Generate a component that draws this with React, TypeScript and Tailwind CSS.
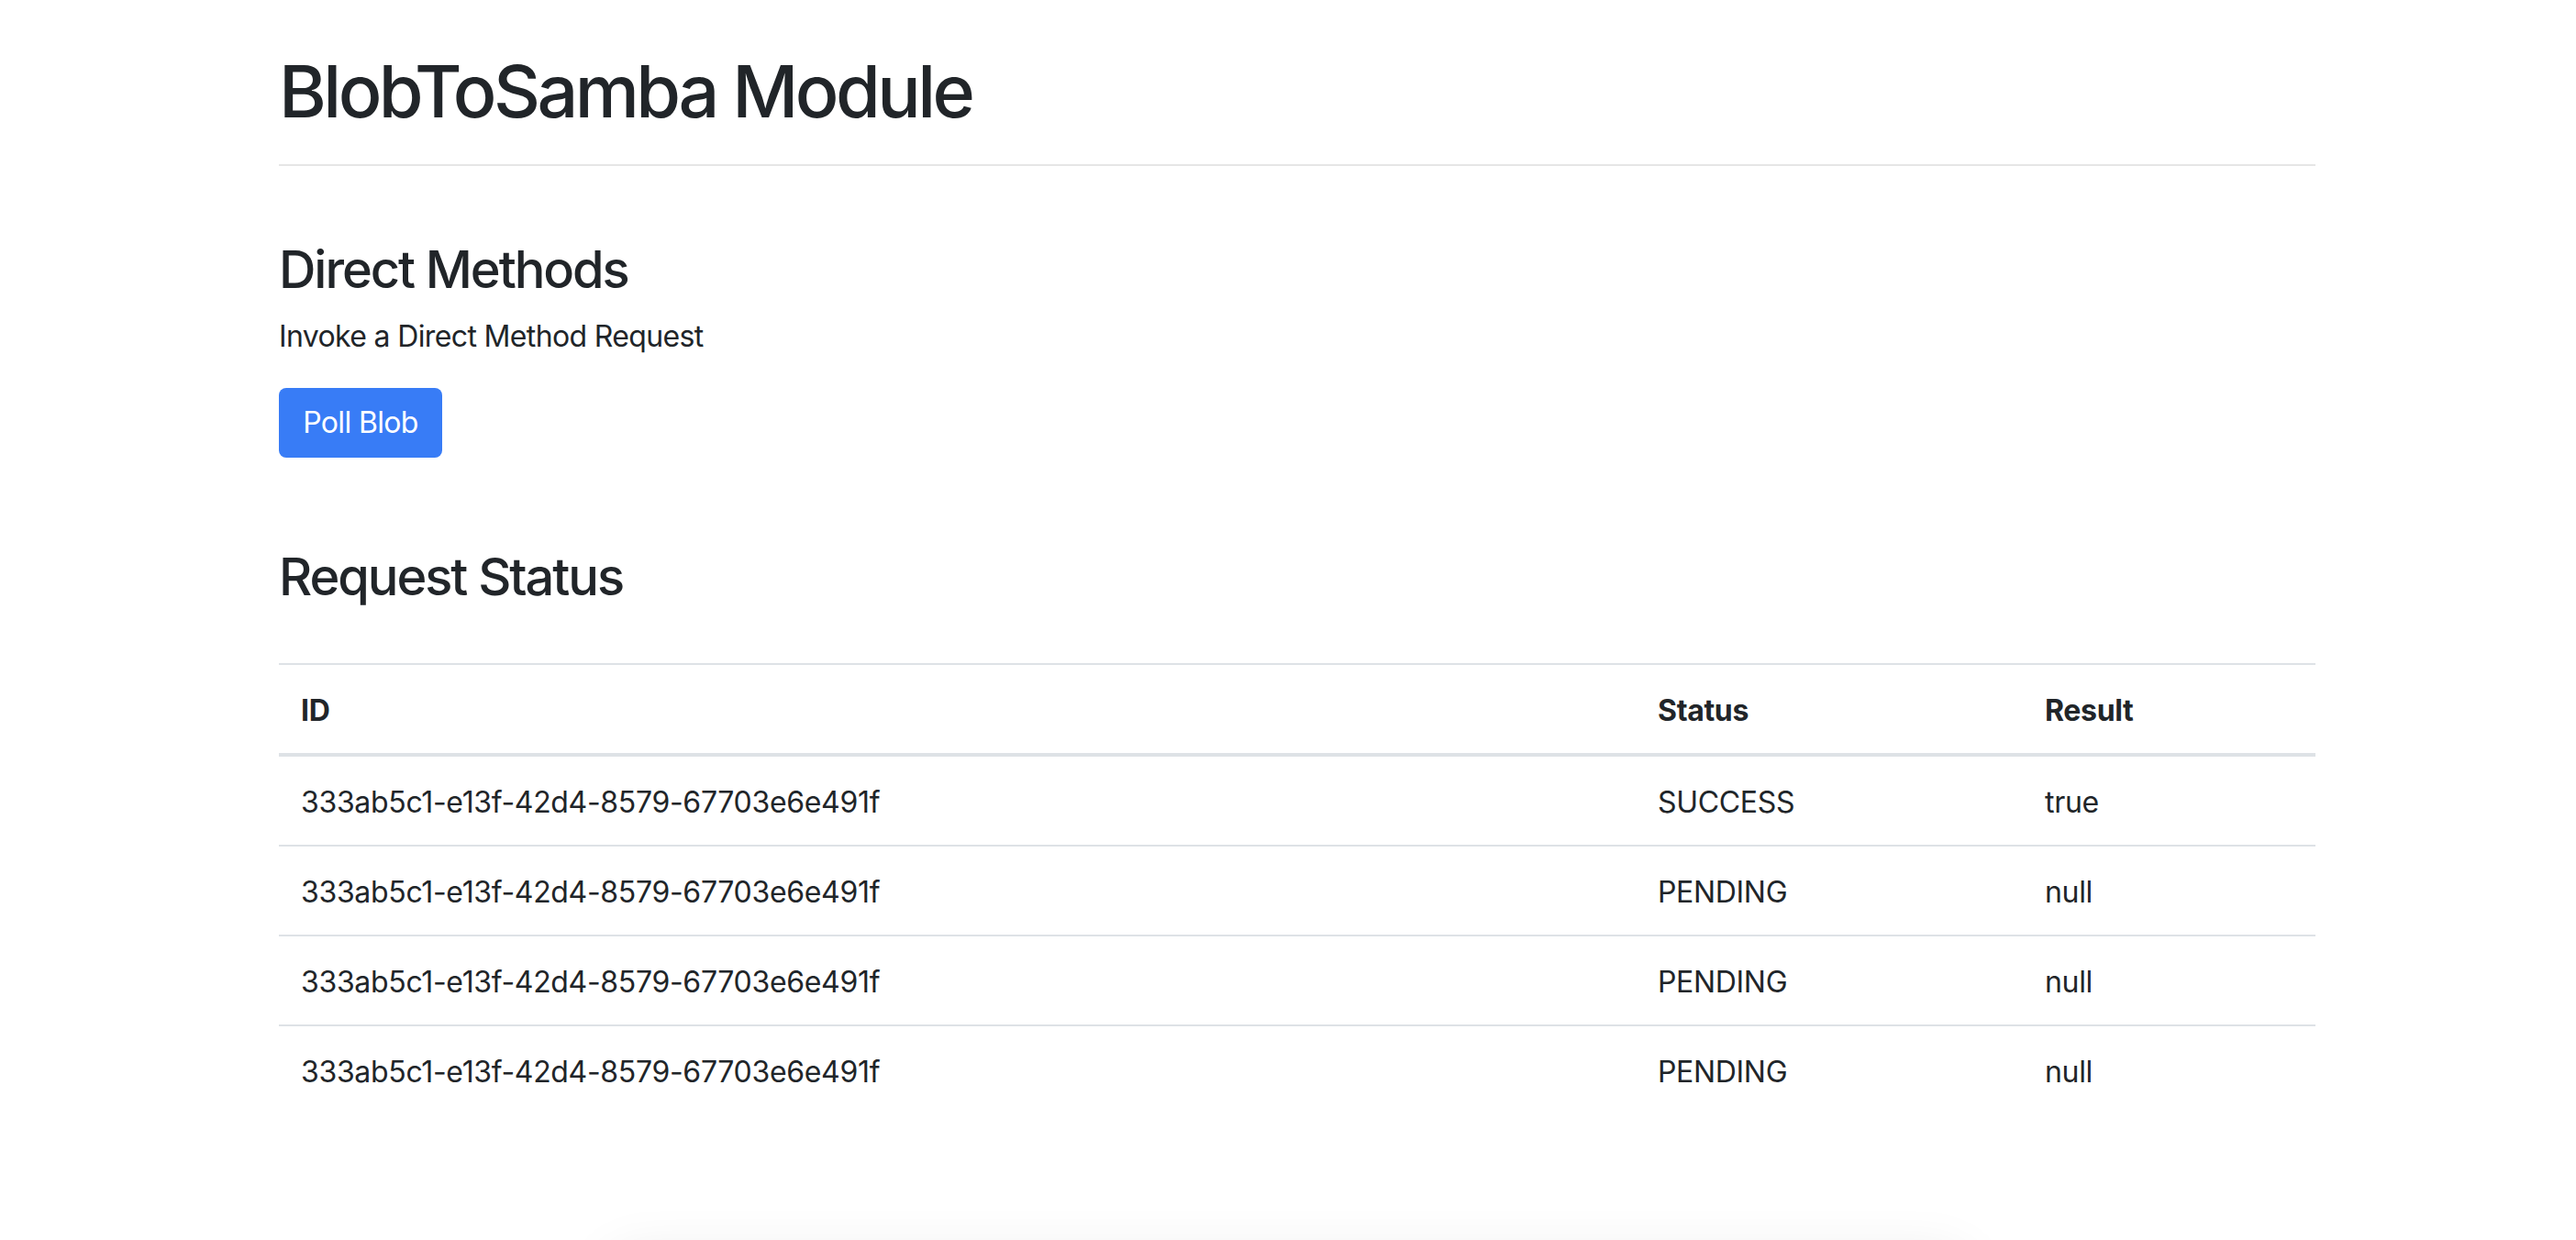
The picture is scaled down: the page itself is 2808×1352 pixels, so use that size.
import React from 'react';

const rows = [
  { id: '333ab5c1-e13f-42d4-8579-67703e6e491f', status: 'SUCCESS', result: 'true' },
  { id: '333ab5c1-e13f-42d4-8579-67703e6e491f', status: 'PENDING', result: 'null' },
  { id: '333ab5c1-e13f-42d4-8579-67703e6e491f', status: 'PENDING', result: 'null' },
  { id: '333ab5c1-e13f-42d4-8579-67703e6e491f', status: 'PENDING', result: 'null' },
];

export default function App() {
  return (
    <div className="min-h-screen overflow-hidden bg-white font-['Inter','Liberation_Sans',sans-serif] text-[#212529]">
      <div className="ml-[304px] w-[2220px] pt-[51px]">
        <h1 className="text-[79px] font-medium leading-[96px] tracking-[-0.045em]">BlobToSamba Module</h1>
        <div className="mt-[32px] h-[2px] bg-[#e6e6e6]" />

        {/* Direct methods */}
        <h3 className="mt-[80px] text-[56px] font-medium leading-[67px] tracking-[-0.037em]">Direct Methods</h3>
        <p className="mt-[15px] text-[32px] leading-[48px] tracking-[-0.02em]">Invoke a Direct Method Request</p>
        <button
          type="button"
          className="mt-[32px] flex h-[76px] w-[178px] items-center justify-center rounded-[8px] bg-[#387cf6] text-[32px] leading-[48px] tracking-[-0.02em] text-white"
        >
          Poll Blob
        </button>

        {/* Request status */}
        <h3 className="mt-[97px] text-[56px] font-medium leading-[67px] tracking-[-0.037em]">Request Status</h3>
        <table className="mt-[60px] w-full table-fixed border-collapse text-[32px] leading-[48px] tracking-[-0.01em]">
          <colgroup>
            <col className="w-[1479px]" />
            <col className="w-[422px]" />
            <col />
          </colgroup>
          <thead>
            <tr>
              <th className="border-t-2 border-b-4 border-[#dee2e6] px-[24px] pt-[26px] pb-[22px] text-left font-bold">ID</th>
              <th className="border-t-2 border-b-4 border-[#dee2e6] px-[24px] pt-[26px] pb-[22px] text-left font-bold">Status</th>
              <th className="border-t-2 border-b-4 border-[#dee2e6] px-[24px] pt-[26px] pb-[22px] text-left font-bold">Result</th>
            </tr>
          </thead>
          <tbody>
            {rows.map((row, i) => (
              <tr key={i}>
                <td className="border-t-2 border-[#dee2e6] px-[24px] pt-[26px] pb-[22px]">{row.id}</td>
                <td className="border-t-2 border-[#dee2e6] px-[24px] pt-[26px] pb-[22px]">{row.status}</td>
                <td className="border-t-2 border-[#dee2e6] px-[24px] pt-[26px] pb-[22px]">{row.result}</td>
              </tr>
            ))}
          </tbody>
        </table>
      </div>

      {/* card peeking in from below the fold */}
      <div className="mx-auto mt-[154px] h-[300px] w-[1480px] rounded-[24px] bg-white shadow-[0_0_60px_rgba(0,0,0,0.09)]" />
    </div>
  );
}
